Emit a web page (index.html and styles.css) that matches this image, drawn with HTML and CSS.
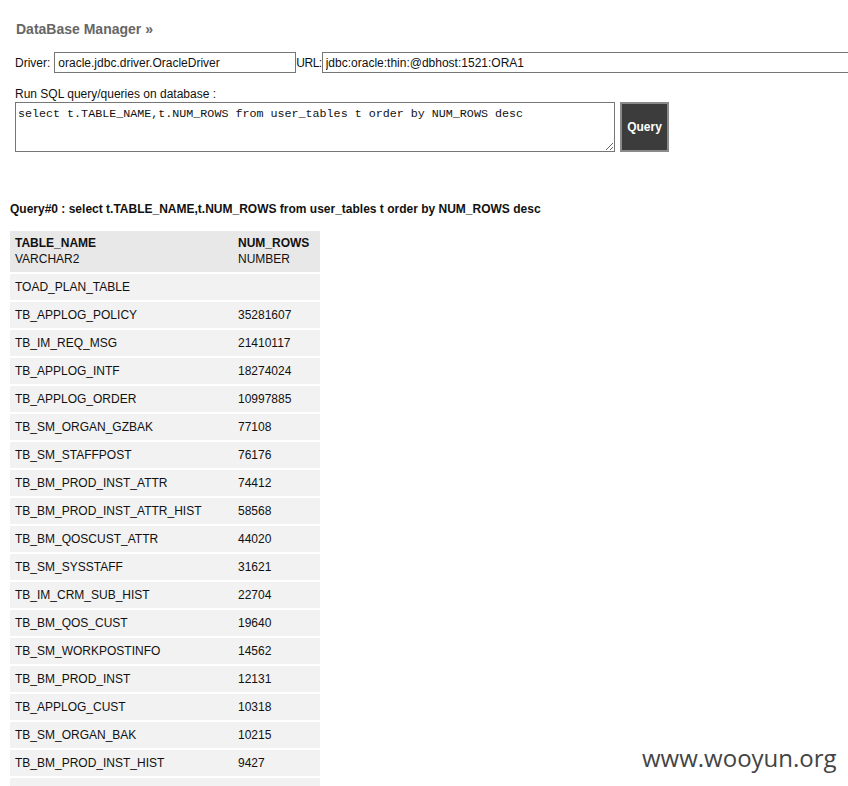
FILE: index.html
```html
<!DOCTYPE html>
<html>
<head>
<meta charset="utf-8">
<link rel="stylesheet" href="styles.css">
</head>
<body>
<div class="page">
  <h2 class="title">DataBase Manager »</h2>
  <div class="conn">
    <span>Driver:</span><input class="driver" type="text" value="oracle.jdbc.driver.OracleDriver"><span class="urllabel">URL:</span><input class="url" type="text" value="jdbc:oracle:thin:@dbhost:1521:ORA1">
  </div>
  <div class="runlabel">Run SQL query/queries on database :</div>
  <div class="sqlrow">
    <textarea class="sql">select t.TABLE_NAME,t.NUM_ROWS from user_tables t order by NUM_ROWS desc</textarea>
    <button class="qbtn">Query</button>
  </div>
  <div class="qtitle">Query#0 : select t.TABLE_NAME,t.NUM_ROWS from user_tables t order by NUM_ROWS desc</div>
  <table class="res">
    <thead>
      <tr><th><b>TABLE_NAME</b><br>VARCHAR2</th><th><b>NUM_ROWS</b><br>NUMBER</th></tr>
    </thead>
    <tbody>
      <tr><td>TOAD_PLAN_TABLE</td><td></td></tr>
      <tr><td>TB_APPLOG_POLICY</td><td>35281607</td></tr>
      <tr><td>TB_IM_REQ_MSG</td><td>21410117</td></tr>
      <tr><td>TB_APPLOG_INTF</td><td>18274024</td></tr>
      <tr><td>TB_APPLOG_ORDER</td><td>10997885</td></tr>
      <tr><td>TB_SM_ORGAN_GZBAK</td><td>77108</td></tr>
      <tr><td>TB_SM_STAFFPOST</td><td>76176</td></tr>
      <tr><td>TB_BM_PROD_INST_ATTR</td><td>74412</td></tr>
      <tr><td>TB_BM_PROD_INST_ATTR_HIST</td><td>58568</td></tr>
      <tr><td>TB_BM_QOSCUST_ATTR</td><td>44020</td></tr>
      <tr><td>TB_SM_SYSSTAFF</td><td>31621</td></tr>
      <tr><td>TB_IM_CRM_SUB_HIST</td><td>22704</td></tr>
      <tr><td>TB_BM_QOS_CUST</td><td>19640</td></tr>
      <tr><td>TB_SM_WORKPOSTINFO</td><td>14562</td></tr>
      <tr><td>TB_BM_PROD_INST</td><td>12131</td></tr>
      <tr><td>TB_APPLOG_CUST</td><td>10318</td></tr>
      <tr><td>TB_SM_ORGAN_BAK</td><td>10215</td></tr>
      <tr><td>TB_BM_PROD_INST_HIST</td><td>9427</td></tr>
      <tr><td>&nbsp;</td><td></td></tr>
    </tbody>
  </table>
</div>
<div class="watermark">www.wooyun.org</div>
</body>
</html>
```
FILE: styles.css
```css
html, body {
  margin: 0;
  padding: 0;
  overflow: hidden;
  height: 786px;
}
body {
  font-family: "Liberation Sans", Arial, sans-serif;
  font-size: 12px;
  color: #111;
  background: #fff;
}
.page {
  padding: 0 0 0 15px;
}
.title {
  margin: 0;
  padding-top: 21px;
  padding-left: 1px;
  font-size: 14px;
  line-height: 16px;
  font-weight: bold;
  color: #666;
}
.conn {
  margin-top: 15px;
  display: flex;
  align-items: center;
  white-space: nowrap;
  height: 21px;
}
.conn input {
  box-sizing: border-box;
  height: 21px;
  border: 1px solid #767676;
  font-family: "Liberation Sans", Arial, sans-serif;
  font-size: 12px;
  color: #111;
  padding: 0 3px;
  margin: 0;
  flex: none;
}
.driver { width: 242px; margin-left: 4px !important; }
.urllabel { margin-left: 0; letter-spacing: -0.5px; }
.url { width: 540px; }
.runlabel {
  margin-top: 13px;
  line-height: 16px;
}
.sqlrow {
  display: flex;
  gap: 5px;
  align-items: flex-start;
}
.sql {
  box-sizing: border-box;
  width: 600px;
  height: 50px;
  margin: 0;
  border: 1px solid #767676;
  font-family: "Liberation Mono", "Courier New", monospace;
  font-size: 11.7px;
  line-height: 14px;
  padding: 4px 2px 2px 2px;
  resize: both;
  color: #111;
}
.qbtn {
  box-sizing: border-box;
  width: 49px;
  height: 50px;
  margin: 0;
  background: #3c3c3c;
  border: 2px solid #8a8a8a;
  color: #fff;
  font-family: "Liberation Sans", Arial, sans-serif;
  font-size: 12px;
  font-weight: bold;
  padding: 0;
}
.qtitle {
  margin-top: 49px;
  margin-left: -5px;
  font-weight: bold;
  line-height: 16px;
}
.res {
  margin-top: 14px;
  margin-left: -5px;
  border-collapse: collapse;
  width: 310px;
}
.res th {
  text-align: left;
  font-weight: normal;
  background: #e8e8e8;
  padding: 4px 5px 5px 5px;
  line-height: 16px;
  border-bottom: 2px solid #fff;
  vertical-align: top;
}
.res th:first-child, .res td:first-child { width: 213px; }
.res td {
  background: #f2f2f2;
  padding: 0 5px;
  height: 26px;
  line-height: 16px;
  border-bottom: 2px solid #fff;
}
.watermark {
  position: absolute;
  left: 642px;
  top: 741px;
  font-family: "Open Sans", "DejaVu Sans", sans-serif;
  font-size: 24px;
  color: #444;
}
```
